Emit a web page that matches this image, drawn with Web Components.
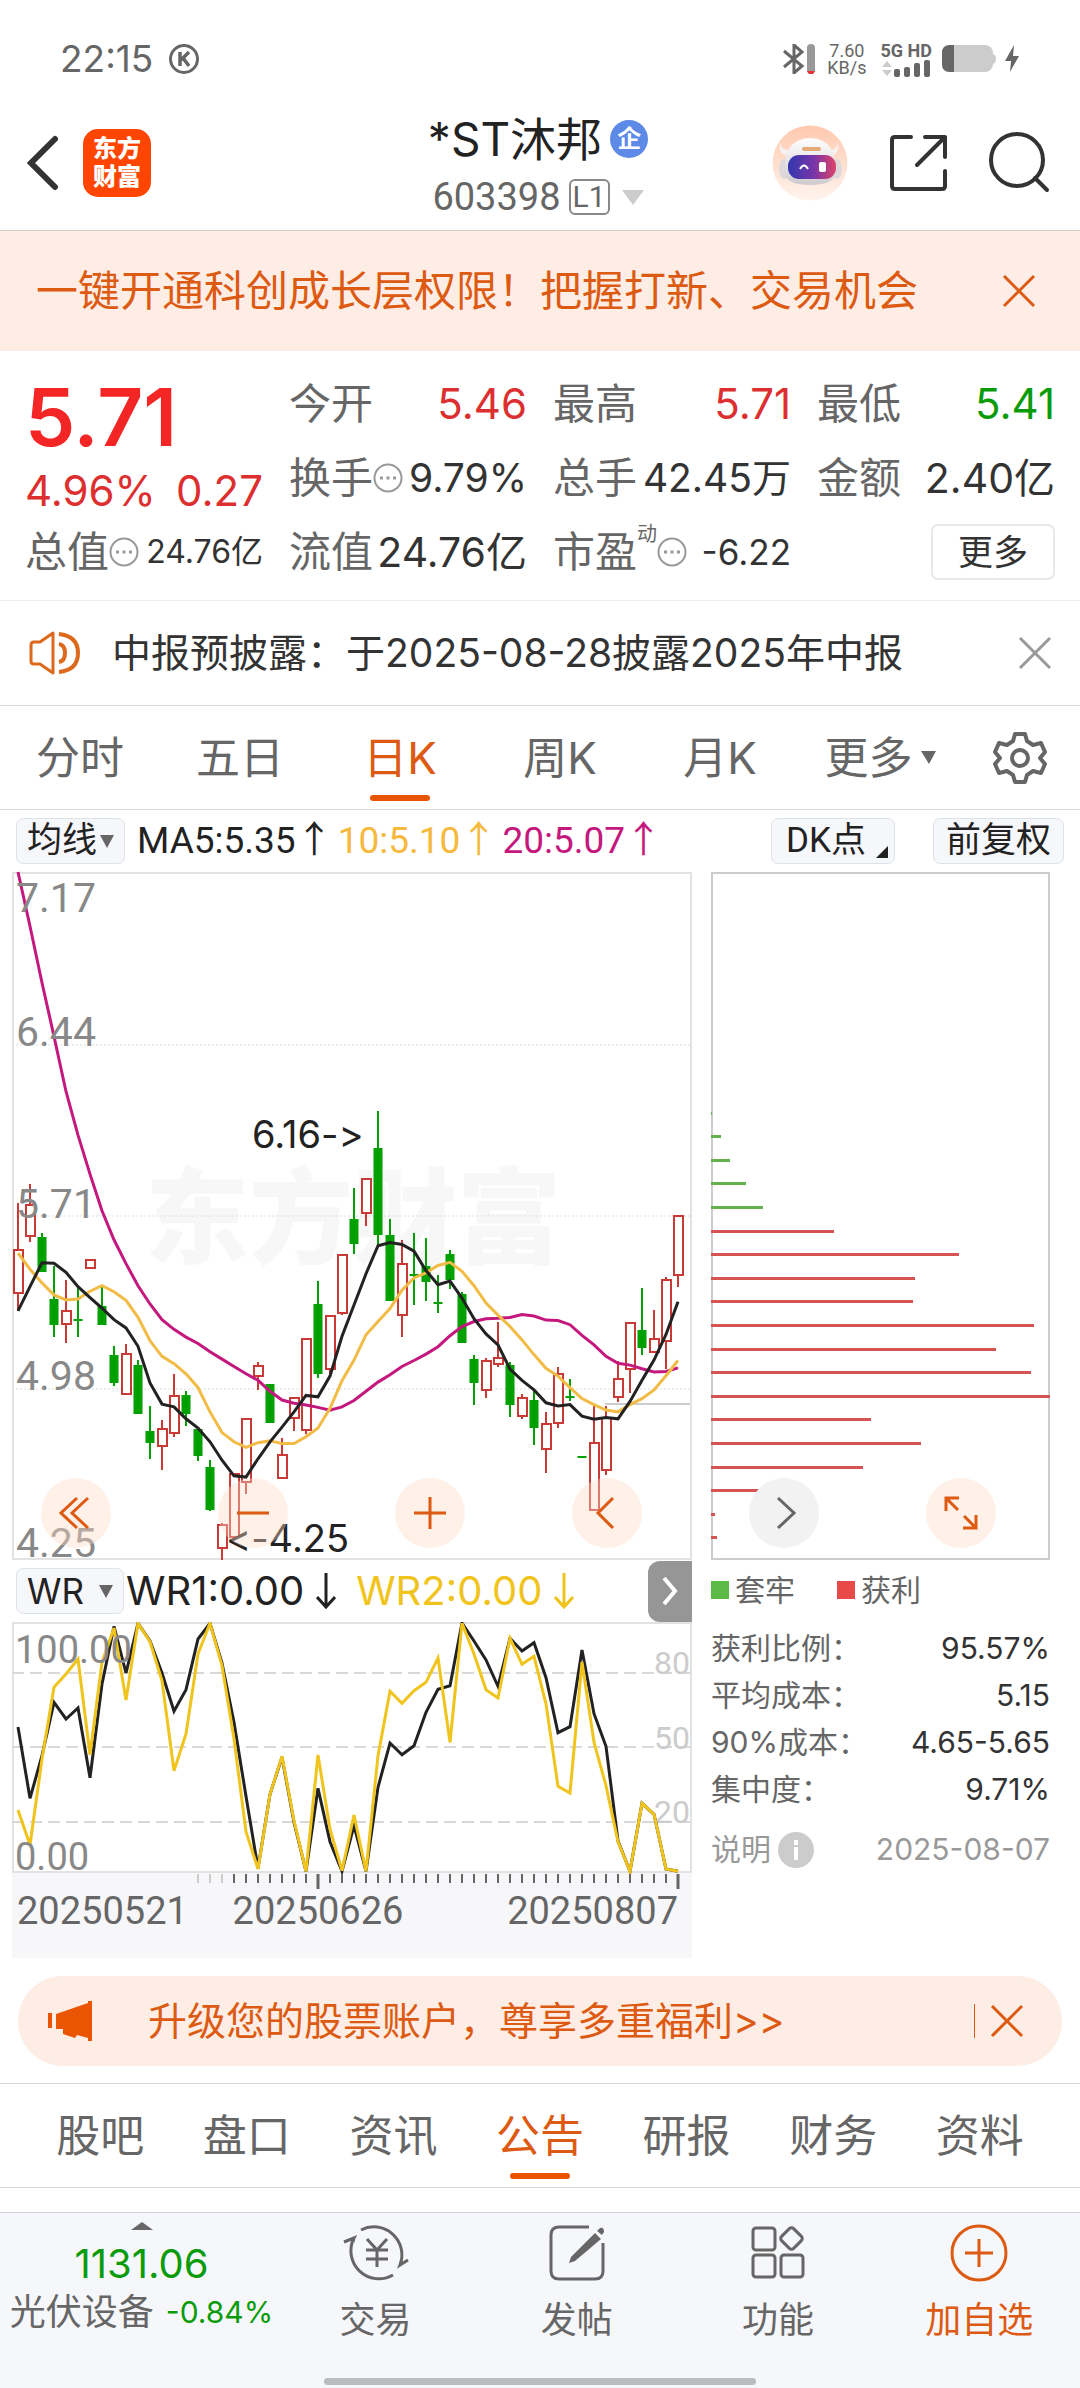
<!DOCTYPE html>
<html lang="zh-CN">
<head>
<meta charset="utf-8">
<meta name="viewport" content="width=device-width, initial-scale=1">
<title>*ST沐邦 603398</title>
<style>
  html {
    --ink: #333;
    --grey: #666;
    --orange: #dd5a12;
    --accent: #ea5504;
    --red: #dd2f30;
    --green: #0a9b0a;
    --line: #d6d7d9;
    --peach: #fdede4;
    --num: Roboto, "Noto Sans CJK SC", sans-serif;
  }

  body {
    margin: 0;
    min-height: 100vh;
    display: flex;
    flex-direction: column;
    background: #fff;
    color: var(--ink);
    font-family: Inter, "Noto Sans CJK SC", sans-serif;
  }

  bottom-nav {
    margin-top: auto;
  }
</style>
</head>
<body>
  <status-bar></status-bar>
  <stock-header></stock-header>
  <tip-banner>一键开通科创成长层权限！把握打新、交易机会</tip-banner>
  <quote-panel></quote-panel>
  <notice-bar>中报预披露：于2025-08-28披露2025年中报</notice-bar>
  <period-tabs></period-tabs>
  <ma-toolbar></ma-toolbar>
  <chart-board></chart-board>
  <promo-bar>升级您的股票账户，尊享多重福利&gt;&gt;</promo-bar>
  <info-tabs></info-tabs>
  <bottom-nav></bottom-nav>

<script>
const base = `
  <style>
    :host, * { box-sizing: border-box; }
    button, select {
      margin: 0;
      padding: 0;
      border: 0;
      background: none;
      font: inherit;
      color: inherit;
      appearance: none;
    }
    svg { display: block; flex: none; }
  </style>
`;

class BaseElement extends HTMLElement {
  constructor() {
    super();

    const template = document.createElement('template');
    template.innerHTML = base + this.constructor.html;
    this.attachShadow({ mode: 'open' }).appendChild(template.content.cloneNode(true));
  }
}

function define(name, html) {
  customElements.define(name, class extends BaseElement {
    static html = html;
  });
}

/* small shared parts */

define('close-button', `
  <style>
    :host { display: block; }
    button { display: block; }
  </style>
  <button type="button" aria-label="关闭">
    <svg width="34" height="34" viewBox="0 0 34 34" fill="none" stroke="currentColor" stroke-width="3">
      <path d="M2 2 32 32M32 2 2 32"/>
    </svg>
  </button>
`);

define('more-dot', `
  <style>
    :host { display: block; color: #999; }
    button { display: block; }
  </style>
  <button type="button" aria-label="说明">
    <svg width="30" height="30" viewBox="0 0 30 30" fill="none" stroke="currentColor" stroke-width="2">
      <circle cx="15" cy="15" r="13.5"/>
      <path d="M7 15h3M13.500 15h3M20 15h3" stroke-width="3"/>
    </svg>
  </button>
`);

define('tab-item', `
  <style>
    :host { display: flex; flex: 1; justify-content: center; color: var(--grey); }
    :host([active]) { color: var(--orange); }
    button {
      position: relative;
      display: flex;
      align-items: center;
      gap: 8px;
      height: 103px;
      font-size: 44px;
      line-height: 60px;
      white-space: nowrap;
    }
    :host([active]) button::after {
      content: '';
      position: absolute;
      left: 50%;
      bottom: 8px;
      width: 60px;
      height: 6px;
      margin-left: -30px;
      border-radius: 3px;
      background: var(--accent);
    }
  </style>
  <button type="button" role="tab"><slot></slot></button>
`);

class DropSelect extends BaseElement {
  static html = `
    <style>
      :host {
        display: flex;
        align-items: center;
        gap: 2px;
        height: 46px;
        padding: 0 10px;
        border: 1px solid #dfe2e7;
        border-radius: 7px;
        background: #f6f7fa;
        color: #222;
        font-size: 35px;
      }
      select { line-height: 44px; height: 44px; }
      :host([wide]) select { margin-right: 12px; }
      .corner { display: none; align-self: flex-end; margin-bottom: 5px; }
      :host([corner]) .corner { display: block; }
      :host([corner]) .arrow { display: none; }
      :host([corner]) { padding: 0 6px 0 14px; }
      :host([corner]) select { margin-right: 8px; }
    </style>
    <select></select>
    <svg class="arrow" width="14" height="13" viewBox="0 0 14 13" fill="#666"><path d="M0 0h14L7 13z"/></svg>
    <svg class="corner" width="12" height="12" viewBox="0 0 12 12" fill="#222"><path d="M12 0v12H0z"/></svg>
  `;

  connectedCallback() {
    const select = this.shadowRoot.querySelector('select');
    select.add(new Option(this.getAttribute('value')));
    select.setAttribute('aria-label', this.getAttribute('label'));
  }
}

customElements.define('drop-select', DropSelect);

/* status bar */

define('status-bar', `
  <style>
    :host {
      display: flex;
      align-items: center;
      justify-content: space-between;
      height: 96px;
      padding: 22px 60px 0;
      color: var(--grey);
    }
    div { display: flex; align-items: center; }
    time { margin-right: 16px; font-size: 37px; line-height: 44px; }
    .speed {
      flex-direction: column;
      margin: 0 14px 0 12px;
      font-family: var(--num);
      font-size: 18px;
      line-height: 17px;
    }
    .net { flex-direction: column; align-items: flex-start; margin-right: 10px; }
    .net b { font: bold 18px/18px var(--num); }
  </style>
  <div>
    <time>22:15</time>
    <svg width="30" height="30" viewBox="0 0 30 30" fill="none" stroke="currentColor" stroke-width="3">
      <circle cx="15" cy="15" r="13.500"/>
      <path d="M11 8v14M20 8l-8 8M14 14l6 8" stroke-width="3.500"/>
    </svg>
  </div>
  <div>
    <svg width="32" height="30" viewBox="0 0 32 30" fill="none" stroke="currentColor" stroke-width="3">
      <path d="M1 7l18 15-8 7V1l8 7L1 23"/>
      <rect x="24" width="8" height="30" rx="4" fill="#999" stroke="none"/>
      <path d="M24 27h8l-2 3h-4z" fill="#e33" stroke="none"/>
    </svg>
    <div class="speed"><span>7.60</span><span>KB/s</span></div>
    <div class="net">
      <b>5G HD</b>
      <svg width="49" height="17" viewBox="0 0 49 17">
        <path d="M1 7l5-6 5 6zM1 10l5 6 5-6z" fill="#ccc"/>
        <g fill="#666">
          <rect x="13" y="9" width="6" height="8" rx="2"/><rect x="23" y="7" width="6" height="10" rx="2"/>
          <rect x="33" y="3" width="6" height="14" rx="2"/><rect x="43" width="6" height="17" rx="2"/>
        </g>
      </svg>
    </div>
    <svg width="78" height="28" viewBox="0 0 78 28">
      <rect width="51" height="27" rx="8" fill="#ccc"/>
      <path d="M50 9q4 0 4 5t-4 5z" fill="#ccc"/>
      <path d="M8 0h4v27H8q-8 0-8-8V8q0-8 8-8z" fill="#666"/>
      <path d="M72 0 63 16h6l-1 11 9-16h-6z" fill="#666"/>
    </svg>
  </div>
`);

/* header */

define('stock-header', `
  <style>
    :host {
      display: grid;
      grid-template-columns: 1fr auto 1fr;
      align-items: center;
      height: 135px;
      padding: 0 30px 0 26px;
      border-bottom: 1px solid #cfd0cb;
    }
    .side { display: flex; align-items: center; gap: 24px; }
    .end { justify-content: flex-end; gap: 40px; }
    .logo {
      width: 68px;
      height: 68px;
      padding-top: 6px;
      border-radius: 15px;
      background: #ff4500;
      color: #fff;
      font-size: 24px;
      font-weight: 900;
      line-height: 28px;
      text-align: center;
    }
    .title { padding-top: 10px; color: #222; }
    h1 {
      display: flex;
      align-items: center;
      justify-content: center;
      gap: 8px;
      margin: 0;
      font-size: 46px;
      font-weight: 400;
      line-height: 58px;
    }
    h1 span {
      width: 38px;
      height: 38px;
      border-radius: 50%;
      background: #5d8ae6;
      color: #fff;
      font-size: 24px;
      font-weight: 700;
      line-height: 38px;
      text-align: center;
    }
    .code {
      display: flex;
      align-items: center;
      justify-content: center;
      gap: 8px;
      height: 58px;
      color: var(--grey);
      font-family: var(--num);
      font-size: 38px;
    }
    .level {
      padding: 0 2px;
      border: 2px solid #888;
      border-radius: 6px;
      font-size: 30px;
      line-height: 32px;
    }
    .code svg { margin-left: 4px; }
  </style>
  <div class="side">
    <button type="button" aria-label="返回">
      <svg width="33" height="56" viewBox="0 0 33 56" fill="none" stroke="#333" stroke-width="6" stroke-linecap="round"><path d="M29 4 5 28l24 24"/></svg>
    </button>
    <div class="logo">东方<br>财富</div>
  </div>
  <div class="title">
    <h1>*ST沐邦<span>企</span></h1>
    <div class="code">603398<span class="level">L1</span>
      <svg width="22" height="15" viewBox="0 0 22 15" fill="#ccc"><path d="M0 0h22L11 15z"/></svg>
    </div>
  </div>
  <div class="side end">
    <button type="button" aria-label="智能助手">
      <svg width="76" height="76" viewBox="0 0 76 76">
        <defs>
          <linearGradient id="halo" x2="0" y2="1"><stop stop-color="#ffc9ae"/><stop offset="1" stop-color="#fff4ee"/></linearGradient>
          <linearGradient id="visor"><stop stop-color="#3238b0"/><stop offset=".55" stop-color="#7a35a8"/><stop offset="1" stop-color="#e04468"/></linearGradient>
          <linearGradient id="shell" x2="0" y2="1"><stop stop-color="#fff"/><stop offset="1" stop-color="#cfcace"/></linearGradient>
        </defs>
        <circle cx="38" cy="38" r="37.500" fill="url(#halo)"/>
        <path d="M8 17q1 8 8 8l-2 6q-8-4-6-14zM66 17q-1 8-8 8l2 6q8-4 6-14z" fill="#f7f2f2"/>
        <ellipse cx="12" cy="44" rx="5" ry="10" fill="#ddd8da"/>
        <ellipse cx="65" cy="44" rx="5" ry="10" fill="#ddd8da"/>
        <path d="M13 38q2-24 25-25 23 1 25 25v11q-2 11-25 11T13 49z" fill="url(#shell)"/>
        <rect x="16" y="30" width="48" height="24" rx="11" fill="url(#visor)"/>
        <rect x="30" y="22" width="19" height="4" rx="2" fill="#e5a877"/>
        <path d="M28 44q4-7 8 0" fill="none" stroke="#fff" stroke-width="2"/>
        <rect x="47" y="37" width="7" height="10" rx="2" fill="#fff"/>
      </svg>
    </button>
    <button type="button" aria-label="分享">
      <svg width="60" height="60" viewBox="0 0 60 60" fill="none" stroke="#333" stroke-width="4" stroke-linecap="round" stroke-linejoin="round">
        <path d="M23 4H7q-3 0-3 3v46q0 3 3 3h47q3 0 3-3V38M37 4h20v20M57 4 29 32"/>
      </svg>
    </button>
    <button type="button" aria-label="搜索">
      <svg width="62" height="62" viewBox="0 0 62 62" fill="none" stroke="#333" stroke-width="4" stroke-linecap="round">
        <circle cx="29" cy="28" r="26"/><path d="m47 46 12 12"/>
      </svg>
    </button>
  </div>
`);

define('tip-banner', `
  <style>
    :host {
      display: flex;
      align-items: center;
      justify-content: space-between;
      height: 120px;
      padding: 0 44px 0 36px;
      background: var(--peach);
      color: var(--orange);
      font-size: 42px;
      line-height: 60px;
      white-space: nowrap;
    }
  </style>
  <slot></slot>
  <close-button></close-button>
`);

/* quote panel */

define('quote-panel', `
  <style>
    :host {
      display: grid;
      grid-template-columns: repeat(4, 1fr);
      grid-auto-rows: 74px;
      column-gap: 26px;
      padding: 16px 25px 11px;
      border-bottom: 1px solid #ececec;
      font-size: 42px;
      line-height: 56px;
      white-space: nowrap;
    }
    .price { grid-row: span 2; color: var(--red); }
    .price strong {
      display: block;
      padding-top: 6px;
      color: #f42525;
      font-size: 80px;
      font-weight: 600;
      line-height: 88px;
    }
    .price div { display: flex; justify-content: space-between; line-height: 60px; }
    .cell { display: flex; align-items: center; justify-content: space-between; }
    .cell > span:first-child, .label { color: var(--grey); }
    .label { display: flex; align-items: center; }
    .up { color: var(--red); }
    .down { color: var(--green); }
    .l { font-size: 41px; }
    .m { font-size: 39px; }
    .s { font-size: 35px; }
    .xs { font-size: 32px; }
    sup { align-self: flex-start; font-size: 20px; line-height: 20px; }
    .cell button {
      width: 124px;
      height: 56px;
      margin-left: auto;
      border: 2px solid #e6e8ea;
      border-radius: 7px;
      font-size: 35px;
      line-height: 50px;
    }
  </style>
  <div class="price">
    <strong>5.71</strong>
    <div><span>4.96%</span><span>0.27</span></div>
  </div>
  <div class="cell"><span>今开</span><span class="up">5.46</span></div>
  <div class="cell"><span>最高</span><span class="up">5.71</span></div>
  <div class="cell"><span>最低</span><span class="down">5.41</span></div>
  <div class="cell"><span class="label">换手<more-dot></more-dot></span><span class="m">9.79%</span></div>
  <div class="cell"><span>总手</span><span class="m">42.45万</span></div>
  <div class="cell"><span>金额</span><span class="l">2.40亿</span></div>
  <div class="cell"><span class="label">总值<more-dot></more-dot></span><span class="xs">24.76亿</span></div>
  <div class="cell"><span>流值</span><span class="l">24.76亿</span></div>
  <div class="cell"><span class="label">市盈<sup>动</sup><more-dot></more-dot></span><span class="s">-6.22</span></div>
  <div class="cell"><button type="button">更多</button></div>
`);

define('notice-bar', `
  <style>
    :host {
      display: flex;
      align-items: center;
      height: 105px;
      padding: 0 28px;
      border-bottom: 1px solid var(--line);
      font-size: 39px;
      line-height: 56px;
      white-space: nowrap;
    }
    .icon { margin-right: 32px; }
    close-button { margin-left: auto; color: #999; }
  </style>
  <svg class="icon" width="52" height="44" viewBox="0 0 52 44" fill="none" stroke="#dd6a1c" stroke-width="3" stroke-linejoin="round">
    <path d="M25 2 12 11H6q-3 0-3 3v16q0 3 3 3h6l13 9z"/>
    <path d="M31 13q6 1 6 9t-6 9M31 3q19 2 19 19T31 41" stroke-width="4"/>
  </svg>
  <slot></slot>
  <close-button></close-button>
`);

/* tabs above and below the charts */

define('period-tabs', `
  <style>
    :host { display: flex; border-bottom: 1px solid var(--line); }
    nav { display: flex; flex: 1; }
    .settings { display: flex; align-items: center; justify-content: center; width: 120px; }
  </style>
  <nav>
    <tab-item>分时</tab-item>
    <tab-item>五日</tab-item>
    <tab-item active>日K</tab-item>
    <tab-item>周K</tab-item>
    <tab-item>月K</tab-item>
    <tab-item>更多<svg width="15" height="13" viewBox="0 0 15 13" fill="#666"><path d="M0 0h15L8 13z"/></svg></tab-item>
  </nav>
  <button class="settings" type="button" aria-label="设置">
    <svg width="54" height="54" viewBox="0 0 54 54" fill="none" stroke="#666" stroke-width="4" stroke-linejoin="round">
      <path d="M22 3h10l2 7 6 4 8-2 4 9-5 6 5 6-4 9-8-2-6 4-2 7H22l-2-7-6-4-8 2-4-9 5-6-5-6 4-9 8 2 6-4z"/>
      <circle cx="27" cy="27" r="8"/>
    </svg>
  </button>
`);

define('ma-toolbar', `
  <style>
    :host {
      display: flex;
      align-items: center;
      height: 62px;
      padding: 0 16px;
      color: #222;
      font-family: var(--num);
      font-size: 37px;
      line-height: 46px;
      white-space: nowrap;
    }
    .values { display: flex; flex: 1; gap: 5px; margin-left: 12px; }
    .ma10 { color: #f5b93d; }
    .ma20 { color: #c4187e; }
    .adjust {
      height: 46px;
      margin-left: 38px;
      padding: 0 12px;
      border: 1px solid #dfe2e7;
      border-radius: 7px;
      background: #f6f7fa;
      font-size: 35px;
      line-height: 44px;
    }
  </style>
  <drop-select value="均线" label="均线"></drop-select>
  <div class="values">
    <span>MA5:5.35↑</span><span class="ma10">10:5.10↑</span><span class="ma20">20:5.07↑</span>
  </div>
  <drop-select value="DK点" label="DK点" corner></drop-select>
  <button class="adjust" type="button">前复权</button>
`);

define('info-tabs', `
  <style>
    :host {
      display: flex;
      padding: 0 27px;
      border: solid var(--line);
      border-width: 1px 0;
    }
  </style>
  <tab-item>股吧</tab-item>
  <tab-item>盘口</tab-item>
  <tab-item>资讯</tab-item>
  <tab-item active>公告</tab-item>
  <tab-item>研报</tab-item>
  <tab-item>财务</tab-item>
  <tab-item>资料</tab-item>
`);

/* charts */

const STEP = 12;
const xAt = i => 6 + i * STEP;

function line(values, y, color) {
  const points = values.map((v, i) => `${xAt(i)},${y(v).toFixed(1)}`).join(' ');
  return `<polyline points="${points}" fill="none" stroke="${color}" stroke-width="3"/>`;
}

// body top, body bottom, high, low; the fifth item marks a falling day
const candles = [
  [848, 947, 747, 983], [750, 823, 706, 833], [823, 899, 813, 899, 1], [957, 1013, 885, 1039, 1],
  [981, 1014, 916, 1053], [1001, 1005, 932, 1039, 1], [869, 891, 869, 891], [972, 1013, 930, 1013, 1],
  [1080, 1140, 1060, 1146, 1], [1074, 1167, 1055, 1167], [1101, 1208, 1090, 1208, 1], [1245, 1270, 1189, 1305, 1],
  [1238, 1280, 1220, 1330], [1166, 1250, 1121, 1258], [1167, 1208, 1158, 1234, 1], [1240, 1300, 1240, 1310, 1],
  [1322, 1417, 1307, 1419, 1], [1448, 1501, 1444, 1525], [1336, 1477, 1336, 1477], [1217, 1357, 1217, 1382],
  [1100, 1127, 1095, 1155], [1142, 1228, 1142, 1228, 1], [1295, 1348, 1260, 1350], [1171, 1219, 1171, 1244],
  [1043, 1245, 1043, 1252], [968, 1121, 917, 1130, 1], [992, 1111, 992, 1120], [858, 989, 858, 992],
  [783, 837, 715, 858, 1], [694, 772, 694, 797], [629, 818, 547, 840, 1], [818, 962, 783, 962, 1],
  [879, 993, 828, 1039], [903, 907, 813, 971, 1], [885, 920, 824, 962, 1], [963, 967, 905, 987, 1],
  [859, 915, 850, 935, 1], [947, 1053, 942, 1053, 1], [1087, 1141, 1080, 1187, 1], [1090, 1157, 1085, 1172],
  [1083, 1101, 1008, 1105], [1101, 1187, 1095, 1213, 1], [1170, 1214, 1163, 1219], [1178, 1238, 1155, 1275, 1],
  [1227, 1286, 1203, 1336], [1119, 1230, 1106, 1238], [1168, 1172, 1131, 1180, 1], [1298, 1302, 1298, 1302, 1],
  [1269, 1419, 1185, 1419], [1213, 1332, 1189, 1341], [1130, 1173, 1091, 1182], [1007, 1111, 1007, 1161],
  [1024, 1064, 932, 1080, 1], [1043, 1075, 982, 1075], [913, 1050, 910, 1110], [775, 906, 775, 930]
];

const ma5 = [
  983, 930, 878, 879, 899, 930, 954, 977, 1002, 1020, 1060, 1140, 1186, 1192, 1218, 1238, 1268, 1308, 1342,
  1345, 1305, 1268, 1236, 1203, 1167, 1170, 1125, 1038, 970, 902, 841, 834, 838, 853, 895, 926, 918, 955,
  1000, 1033, 1057, 1110, 1134, 1155, 1183, 1190, 1187, 1212, 1219, 1215, 1218, 1180, 1134, 1090, 1034, 963
];
const ma10 = [
  857, 892, 922, 948, 959, 957, 940, 928, 941, 960, 997, 1048, 1082, 1098, 1120, 1150, 1203, 1248, 1268,
  1280, 1270, 1266, 1272, 1272, 1257, 1238, 1195, 1135, 1090, 1035, 1006, 978, 938, 911, 900, 884, 877, 897,
  928, 966, 992, 1017, 1046, 1078, 1108, 1125, 1150, 1174, 1187, 1199, 1203, 1187, 1174, 1155, 1124, 1091
];
const ma20 = [
  27, 145, 268, 385, 505, 600, 685, 765, 828, 880, 928, 968, 1002, 1023, 1040, 1054, 1072, 1088, 1104,
  1120, 1134, 1158, 1177, 1184, 1188, 1193, 1199, 1192, 1178, 1158, 1138, 1122, 1104, 1091, 1077, 1061, 1037,
  1017, 1006, 1000, 999, 997, 991, 994, 1003, 1004, 1013, 1036, 1057, 1082, 1097, 1101, 1109, 1116, 1115, 1107
];

const priceY = v => (v - 27) / 2.178;

function candle([top, bottom, high, low, falling], i) {
  const x = xAt(i);
  const color = falling ? '#00a000' : '#c93a36';
  const [t, b, h, l] = [top, bottom, high, low].map(v => Math.round(priceY(v)));
  const body = falling
    ? `<rect x="${x - 4.5}" y="${t}" width="9" height="${Math.max(b - t, 2)}" fill="${color}"/>`
    : `<rect x="${x - 4}" y="${t + 1}" width="9" height="${b - t - 2}" fill="#fff" stroke="${color}" stroke-width="2"/>`;
  return `<path d="M${x} ${h}V${l}" stroke="${color}" stroke-width="2"/>${body}`;
}

define('k-chart', `
  <style>
    :host { display: block; }
    svg { width: 100%; height: auto; overflow: visible; }
    text { font-size: 41px; font-family: var(--num); fill: #888; }
    .watermark { font-size: 104px; font-weight: 900; fill: #f7f7f7; }
    .mark { font-family: Inter, sans-serif; font-size: 38px; font-variant-ligatures: none; font-feature-settings: "calt" 0; fill: #222; }
  </style>
  <svg viewBox="0 0 680 688">
    <text class="watermark" x="133" y="384">东方财富</text>
    <path d="M0 173H680M0 344H680M0 517H680" stroke="#ddd" stroke-width="1" stroke-dasharray="2 2"/>
    <path d="M593 532H680" stroke="#ccc" stroke-width="2"/>
    <rect x="1" y="1" width="678" height="686" fill="none" stroke="#e2e2e2" stroke-width="2"/>
    ${candles.map(candle).join('')}
    ${line(ma20, priceY, '#c4187e')}
    ${line(ma10, priceY, '#f2bb45')}
    ${line(ma5, priceY, '#222')}
    <text x="4" y="40">7.17</text>
    <text x="4" y="174">6.44</text>
    <text x="4" y="346">5.71</text>
    <text x="4" y="518">4.98</text>
    <text x="4" y="685">4.25</text>
    <text class="mark" x="240" y="276">6.16-&gt;</text>
    <text class="mark" x="214" y="680">&lt;-4.25</text>
  </svg>
`);

// bar lengths from the highest price down, one every 23.6px
const costs = [1, 10, 19, 35, 52, 123, 248, 204, 202, 323, 285, 320, 339, 160, 210, 152, 52, 4, 6];

define('cost-chart', `
  <style>
    :host { display: block; }
    svg { width: 100%; height: auto; }
  </style>
  <svg viewBox="0 0 339 688">
    <rect x="1" y="1" width="337" height="686" fill="none" stroke="#ccc" stroke-width="2"/>
    ${costs.map((w, i) => `<rect y="${Math.round(239.5 + i * 23.6)}" width="${w}" height="3" fill="${i < 5 ? '#62b350' : '#d65353'}"/>`).join('')}
  </svg>
`);

const wr1 = [
  504, 718, 590, 430, 480, 447, 656, 375, 202, 342, 193, 246, 342, 457, 392, 240, 193, 312, 490,
  712, 928, 706, 595, 790, 937, 688, 848, 937, 800, 937, 685, 552, 587, 560, 460, 391, 380, 192,
  246, 303, 382, 238, 276, 251, 356, 521, 503, 273, 464, 562, 846, 937, 733, 766, 930, 937
];
const wr2 = [
  753, 858, 600, 385, 345, 300, 587, 310, 207, 423, 193, 248, 365, 635, 525, 285, 193, 320, 540,
  818, 930, 706, 592, 785, 937, 588, 810, 935, 768, 937, 590, 397, 433, 395, 370, 297, 550, 193,
  285, 392, 417, 238, 316, 292, 435, 682, 702, 309, 550, 680, 848, 937, 733, 766, 930, 937
];
const wrY = v => (v - 189) / 3;

let ticks = '';
for (let i = 15; i < 56; i++) {
  const long = i === 25 || i === 55;
  ticks += `<path d="M${xAt(i)} 252v${long ? 15 : 9}" stroke="${i < 18 ? '#ccc' : '#666'}" stroke-width="${long ? 3 : 2}"/>`;
}

define('wr-chart', `
  <style>
    :host { display: block; }
    svg { width: 100%; height: auto; }
    text { font-family: var(--num); font-size: 38px; fill: #888; }
    .level { font-size: 32px; fill: #ccc; }
    .date { fill: #666; }
  </style>
  <svg viewBox="0 0 680 336">
    <rect y="251" width="680" height="85" fill="#f7f7fa"/>
    <rect x="1" y="1" width="678" height="249" fill="none" stroke="#e2e2e2" stroke-width="2"/>
    <path d="M0 51H680M0 125H680M0 200H680" stroke="#d8d8d8" stroke-width="2" stroke-dasharray="12 6"/>
    <text class="level" x="678" y="52" text-anchor="end">80</text>
    <text class="level" x="678" y="127" text-anchor="end">50</text>
    <text class="level" x="678" y="201" text-anchor="end">20</text>
    ${line(wr1, wrY, '#222')}
    ${line(wr2, wrY, '#f0c41c')}
    <text x="3" y="41">100.00</text>
    <text x="3" y="248">0.00</text>
    ${ticks}
    <text class="date" x="5" y="302">20250521</text>
    <text class="date" x="306" y="302" text-anchor="middle">20250626</text>
    <text class="date" x="666" y="302" text-anchor="end">20250807</text>
  </svg>
`);

define('wr-toolbar', `
  <style>
    :host {
      display: flex;
      align-items: center;
      height: 62px;
      padding-left: 4px;
      color: #222;
      font-size: 40px;
      line-height: 46px;
      white-space: nowrap;
    }
    .values { display: flex; flex: 1; gap: 20px; margin-left: 2px; }
    span { display: flex; align-items: center; gap: 12px; }
    .wr2 { color: #f0c41c; }
    .next {
      display: flex;
      align-items: center;
      justify-content: center;
      width: 44px;
      height: 61px;
      border-radius: 12px 0 0 12px;
      background: #969696;
    }
  </style>
  <drop-select value="WR" label="指标" wide></drop-select>
  <div class="values">
    <span>WR1:0.00<svg width="20" height="36" viewBox="0 0 20 36" fill="none" stroke="currentColor" stroke-width="3"><path d="M10 0v34M1 24l9 10 9-10"/></svg></span>
    <span class="wr2">WR2:0.00<svg width="20" height="36" viewBox="0 0 20 36" fill="none" stroke="currentColor" stroke-width="3"><path d="M10 0v34M1 24l9 10 9-10"/></svg></span>
  </div>
  <button class="next" type="button" aria-label="下一个指标">
    <svg width="16" height="28" viewBox="0 0 16 28" fill="none" stroke="#fff" stroke-width="4"><path d="m2 1 11 13L2 27"/></svg>
  </button>
`);

define('cost-stats', `
  <style>
    :host { display: block; font-size: 30px; line-height: 47px; color: var(--grey); white-space: nowrap; }
    .legend { display: flex; gap: 42px; height: 60px; align-items: center; }
    .legend span { display: flex; align-items: center; gap: 6px; }
    .legend span::before { content: ''; width: 18px; height: 18px; background: #5bb946; }
    .legend .gain::before { background: #e84a4a; }
    dl { margin: 5px 0 0; }
    dl div, .foot { display: flex; justify-content: space-between; }
    dd { margin: 0; color: #333; }
    .foot { align-items: center; margin-top: 13px; color: #999; }
    .foot button { display: flex; align-items: center; gap: 7px; }
  </style>
  <div class="legend"><span>套牢</span><span class="gain">获利</span></div>
  <dl>
    <div><dt>获利比例：</dt><dd>95.57%</dd></div>
    <div><dt>平均成本：</dt><dd>5.15</dd></div>
    <div><dt>90%成本：</dt><dd>4.65-5.65</dd></div>
    <div><dt>集中度：</dt><dd>9.71%</dd></div>
  </dl>
  <div class="foot">
    <button type="button">说明
      <svg width="36" height="36" viewBox="0 0 36 36"><circle cx="18" cy="18" r="18" fill="#ccc"/><path d="M18 8v5M18 15v13" stroke="#fff" stroke-width="4"/></svg>
    </button>
    <time>2025-08-07</time>
  </div>
`);

define('chart-controls', `
  <style>
    :host { display: flex; justify-content: space-between; }
    button {
      display: flex;
      align-items: center;
      justify-content: center;
      width: 70px;
      height: 70px;
      border-radius: 50%;
      background: rgba(255, 218, 198, .4);
      color: #dd5a12;
    }
    .end { background: #f2f2f2; color: #666; }
    svg { fill: none; stroke: currentColor; stroke-width: 3; }
  </style>
  <button type="button" aria-label="最早"><svg width="34" height="34" viewBox="0 0 34 34"><path d="M18 2 2 17l16 15M29 2 13 17l16 15"/></svg></button>
  <button type="button" aria-label="缩小"><svg width="34" height="34" viewBox="0 0 34 34"><path d="M1 17h32"/></svg></button>
  <button type="button" aria-label="放大"><svg width="34" height="34" viewBox="0 0 34 34"><path d="M1 17h32M17 1v32"/></svg></button>
  <button type="button" aria-label="前移"><svg width="34" height="34" viewBox="0 0 34 34"><path d="M23 2 8 17l15 15"/></svg></button>
  <button class="end" type="button" aria-label="后移"><svg width="34" height="34" viewBox="0 0 34 34"><path d="m11 2 16 15-16 15"/></svg></button>
  <button type="button" aria-label="全屏"><svg width="34" height="34" viewBox="0 0 34 34"><path d="M2 15V2h13M2 2l12 12M32 19v13H19M32 32 20 20"/></svg></button>
`);

define('chart-board', `
  <style>
    :host { display: block; padding: 0 30px 0 12px; }
    .row {
      position: relative;
      display: grid;
      grid-template-columns: 680fr 339fr;
      column-gap: 19px;
      align-items: start;
    }
    chart-controls { position: absolute; left: 29px; right: 54px; bottom: 12px; }
  </style>
  <div class="row">
    <k-chart></k-chart>
    <cost-chart></cost-chart>
    <chart-controls></chart-controls>
  </div>
  <div class="row">
    <div>
      <wr-toolbar></wr-toolbar>
      <wr-chart></wr-chart>
    </div>
    <cost-stats></cost-stats>
  </div>
`);

define('promo-bar', `
  <style>
    :host {
      display: flex;
      align-items: center;
      height: 90px;
      margin: 18px 18px 17px;
      padding: 0 38px 0 29px;
      border-radius: 45px;
      background: var(--peach);
      color: var(--orange);
      font-size: 39px;
      line-height: 56px;
      white-space: nowrap;
    }
    .icon { margin-right: 54px; }
    a { color: inherit; text-decoration: none; }
    close-button { margin-left: auto; padding-left: 15px; border-left: 1px solid currentColor; }
  </style>
  <svg class="icon" width="47" height="40" viewBox="0 0 47 40" fill="#ea5504">
    <path d="M1 12h4v15H1zM9 13 41 2V0h4v40h-4v-3l-11-3-2 3-12-4v-5H9z"/>
  </svg>
  <a href="#"><slot></slot></a>
  <close-button></close-button>
`);

/* bottom navigation */

define('nav-item', `
  <style>
    :host { display: flex; flex: 1; color: var(--grey); }
    :host([active]) { color: #dd5a12; }
    a {
      display: flex;
      flex: 1;
      flex-direction: column;
      align-items: center;
      gap: 17px;
      padding-top: 10px;
      color: inherit;
      text-decoration: none;
      font-size: 36px;
      line-height: 40px;
    }
  </style>
  <a href="#"><slot name="icon"></slot><slot></slot></a>
`);

define('bottom-nav', `
  <style>
    :host {
      display: block;
      padding-bottom: 3px;
      border-top: 1px solid #cfd1d4;
      background: #f6f7fa;
    }
    nav { display: flex; height: 165px; }
    nav svg { fill: none; stroke: currentColor; stroke-width: 3; }
    .index {
      display: flex;
      flex-direction: column;
      align-items: center;
      width: 275px;
      padding: 9px 0 0 8px;
      color: var(--green);
      text-decoration: none;
      white-space: nowrap;
    }
    .index svg { fill: #666; stroke: none; }
    .index b { margin-top: 9px; font-size: 40px; font-weight: 400; line-height: 50px; }
    .index div { display: flex; align-items: center; gap: 12px; font-size: 30px; line-height: 46px; }
    .index div span { color: var(--grey); font-size: 36px; }
    .home { width: 40%; height: 7px; margin: 0 auto; border-radius: 4px; background: #bbbcbe; }
  </style>
  <nav>
    <a class="index" href="#">
      <svg width="22" height="8" viewBox="0 0 22 8"><path d="M11 0 22 8H0z"/></svg>
      <b>1131.06</b>
      <div><span>光伏设备</span>-0.84%</div>
    </a>
    <nav-item>
      <svg slot="icon" width="66" height="60" viewBox="0 0 66 60">
        <path d="M18 7A28 28 0 0 1 57 42l8-5M57 42l1-4M50 52A28 28 0 0 1 11 15L1 19M11 15l-1 4"/>
        <path d="m24 16 10 11 10-11M34 27v17M23 27h22M23 36h22" stroke-width="3"/>
      </svg>
      交易
    </nav-item>
    <nav-item>
      <svg slot="icon" width="60" height="60" viewBox="0 0 60 60">
        <path d="M42 4H12q-8 0-8 8v36q0 8 8 8h36q8 0 8-8V20"/>
        <path d="M48 10 54 16 28 38 22 40 24 34zM50 8l3-3q4-1 4 4l-2 3z" fill="currentColor" stroke="none"/>
      </svg>
      发帖
    </nav-item>
    <nav-item>
      <svg slot="icon" width="56" height="60" viewBox="0 0 56 60">
        <rect x="3" y="5" width="22" height="22" rx="3"/>
        <rect x="3" y="32" width="22" height="22" rx="3"/>
        <rect x="31" y="32" width="22" height="22" rx="3"/>
        <rect x="33" y="7" width="17" height="17" rx="3" transform="rotate(45 41.500 15.500)"/>
      </svg>
      功能
    </nav-item>
    <nav-item active>
      <svg slot="icon" width="60" height="60" viewBox="0 0 60 60">
        <circle cx="30" cy="30" r="27"/><path d="M30 16v28M16 30h28"/>
      </svg>
      加自选
    </nav-item>
  </nav>
  <div class="home"></div>
`);
</script>
</body>
</html>
